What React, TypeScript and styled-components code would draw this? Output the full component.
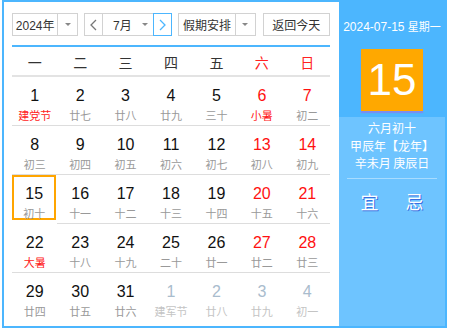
import React from 'react';
import styled, { createGlobalStyle } from 'styled-components';

const GlobalStyle = createGlobalStyle`
  html, body {
    margin: 0;
    padding: 0;
    background: #fff;
  }
  body {
    font-family: "Liberation Sans", Arial, "Noto Sans CJK SC", sans-serif;
  }
`

const Widget = styled.div`
  box-sizing: border-box;
  width: 445px;
  height: 328px;
  margin-left: 2px;
  border: 2px solid #4cb6fe;
  display: flex;
`

const Main = styled.div`
  width: 335px;
  padding: 11px 9px 0 8px;
  box-sizing: border-box;
  display: flex;
  flex-direction: column;
`

const Toolbar = styled.div`
  display: flex;
  align-items: center;
  height: 23px;
  gap: 6px;
  padding-bottom: 9px;
  border-bottom: 2px solid #4cb6fe;
`

const Select = styled.div<{ $w: number }>`
  box-sizing: border-box;
  width: ${p => p.$w}px;
  height: 23px;
  border: 1px solid #d2d2d2;
  display: flex;
  align-items: center;
  font-size: 12px;
  color: #333;
  background: #fff;
`

const SelectText = styled.span`
  flex: 1;
  text-align: center;
`

const Arrow = styled.span`
  width: 19px;
  height: 100%;
  border-left: 1px solid #d2d2d2;
  display: flex;
  align-items: center;
  justify-content: center;
  &::after {
    content: '';
    border-left: 3px solid transparent;
    border-right: 3px solid transparent;
    border-top: 3px solid #888;
  }
`

const MonthGroup = styled.div`
  display: flex;
  height: 23px;
`

const NavButton = styled.div<{ $active?: boolean }>`
  box-sizing: border-box;
  width: 19px;
  height: 23px;
  border: 1px solid ${p => p.$active ? '#4cb6fe' : '#d2d2d2'};
  display: flex;
  align-items: center;
  justify-content: center;
  background: #fff;
`

const MonthSelect = styled.div`
  box-sizing: border-box;
  width: 50px;
  height: 23px;
  border-top: 1px solid #d2d2d2;
  border-bottom: 1px solid #d2d2d2;
  display: flex;
  align-items: center;
  font-size: 12px;
  color: #333;
  padding-left: 4px;
  & > span:first-child {
    flex: 1;
    text-align: center;
  }
`

const MonthArrow = styled.span`
  width: 16px;
  display: flex;
  justify-content: center;
  &::after {
    content: '';
    border-left: 3px solid transparent;
    border-right: 3px solid transparent;
    border-top: 3px solid #888;
  }
`

const TodayButton = styled.div`
  box-sizing: border-box;
  width: 68px;
  height: 23px;
  margin-left: 1px;
  border: 1px solid #d2d2d2;
  display: flex;
  align-items: center;
  justify-content: center;
  font-size: 12px;
  color: #333;
`

const Grid = styled.div`
  display: grid;
  grid-template-columns: repeat(7, 1fr);
`

const WeekHead = styled.div<{ $red?: boolean }>`
  height: 27px;
  padding-top: 1px;
  display: flex;
  align-items: center;
  justify-content: center;
  font-size: 14px;
  color: ${p => p.$red ? '#f22' : '#333'};
  border-bottom: 2px solid #e3e3e3;
`

const Cell = styled.div<{ $today?: boolean; $last?: boolean }>`
  box-sizing: border-box;
  height: ${p => p.$last ? 48 : 49}px;
  border-bottom: ${p => p.$last ? 'none' : '1px solid #ddd'};
  display: flex;
  flex-direction: column;
  align-items: center;
  padding-top: ${p => p.$today ? 8 : 10}px;
  ${p => p.$today && `
    border: 2px solid #ffa500;
    margin-right: 1px;
    height: 45px;
    margin-bottom: 2px;
  `}
`

const DayNum = styled.div<{ $tone: 'normal' | 'red' | 'other' }>`
  font-size: 16px;
  line-height: 18px;
  color: ${p => p.$tone === 'red' ? '#f11' : p.$tone === 'other' ? '#a9bccd' : '#111'};
`

const Lunar = styled.div<{ $tone: 'normal' | 'red' | 'other' }>`
  font-size: 11px;
  line-height: 16px;
  margin-top: 2px;
  font-family: "Noto Sans CJK SC", sans-serif;
  color: ${p => p.$tone === 'red' ? '#f22' : p.$tone === 'other' ? '#c4c4c4' : '#999'};
`

const Side = styled.div`
  flex: 1;
  display: flex;
  flex-direction: column;
  color: #fff;
`

const SideTop = styled.div`
  background: #4cb6fe;
  height: 115px;
  display: flex;
  flex-direction: column;
  align-items: center;
`

const DateLine = styled.div`
  font-size: 12px;
  line-height: 16px;
  margin-top: 16px;
  font-family: "Liberation Sans Narrow", "Liberation Sans", sans-serif;
  & > span {
    font-family: "Noto Sans CJK SC", sans-serif;
    font-size: 11px;
  }
`

const BigDay = styled.div`
  width: 62px;
  height: 62px;
  margin-top: 14px;
  background: #ffa800;
  box-shadow: 0 2px 1px #7a8ef0;
  display: flex;
  align-items: center;
  justify-content: center;
  font-size: 44px;
  color: #fff;
`

const SideBottom = styled.div`
  flex: 1;
  background: #6ec4ff;
  display: flex;
  flex-direction: column;
  align-items: center;
  padding-top: 2px;
`

const InfoLine = styled.div`
  font-size: 12px;
  line-height: 17.5px;
  font-family: "Noto Sans CJK SC", sans-serif;
`

const Divider = styled.div`
  width: 90px;
  height: 1px;
  background: #a8dcff;
  margin-top: 6px;
`

const YiJi = styled.div`
  display: flex;
  gap: 27px;
  margin-top: 11px;
  font-size: 18px;
  line-height: 22px;
  font-family: "Noto Sans CJK SC", sans-serif;
  text-shadow: 1px 1px 0 #3a6fe0;
`

const Chevron = ({ dir, color }: { dir: 'left' | 'right'; color: string }) => (
  <svg width="7" height="12" viewBox="0 0 7 12">
    <path d={dir === 'left' ? 'M6 1 L1 6 L6 11' : 'M1 1 L6 6 L1 11'} fill="none" stroke={color} strokeWidth="1.3" />
  </svg>
)

type Tone = 'normal' | 'red' | 'other'
interface Day { n: number; lunar: string; numTone: Tone; lunarTone: Tone; today?: boolean }

const raw: [number, string, boolean?][] = [
  [1, '建党节', true], [2, '廿七'], [3, '廿八'], [4, '廿九'], [5, '三十'], [6, '小暑', true], [7, '初二'],
  [8, '初三'], [9, '初四'], [10, '初五'], [11, '初六'], [12, '初七'], [13, '初八'], [14, '初九'],
  [15, '初十'], [16, '十一'], [17, '十二'], [18, '十三'], [19, '十四'], [20, '十五'], [21, '十六'],
  [22, '大暑', true], [23, '十八'], [24, '十九'], [25, '二十'], [26, '廿一'], [27, '廿二'], [28, '廿三'],
  [29, '廿四'], [30, '廿五'], [31, '廿六'], [1, '建军节'], [2, '廿八'], [3, '廿九'], [4, '初一'],
]

const days: Day[] = raw.map(([n, lunar, fest], i) => {
  const other = i >= 31
  const weekend = i % 7 >= 5
  return {
    n,
    lunar,
    numTone: other ? 'other' : weekend ? 'red' : 'normal',
    lunarTone: other ? 'other' : fest ? 'red' : 'normal',
    today: i === 14,
  }
})

const weekNames = ['一', '二', '三', '四', '五', '六', '日']

const App = () => {
  return (
    <>
      <GlobalStyle />
      <Widget>
        <Main>
          <Toolbar>
            <Select $w={67}>
              <SelectText>2024年</SelectText>
              <Arrow />
            </Select>
            <MonthGroup>
              <NavButton><Chevron dir="left" color="#777" /></NavButton>
              <MonthSelect>
                <span>7月</span>
                <MonthArrow />
              </MonthSelect>
              <NavButton $active><Chevron dir="right" color="#4cb6fe" /></NavButton>
            </MonthGroup>
            <Select $w={78}>
              <SelectText>假期安排</SelectText>
              <Arrow />
            </Select>
            <TodayButton>返回今天</TodayButton>
          </Toolbar>
          <Grid>
            {weekNames.map((w, i) => <WeekHead key={w} $red={i >= 5}>{w}</WeekHead>)}
            {days.map((d, i) => (
              <Cell key={i} $today={d.today} $last={i >= 28}>
                <DayNum $tone={d.numTone}>{d.n}</DayNum>
                <Lunar $tone={d.lunarTone}>{d.lunar}</Lunar>
              </Cell>
            ))}
          </Grid>
        </Main>
        <Side>
          <SideTop>
            <DateLine>2024-07-15 <span>星期一</span></DateLine>
            <BigDay>15</BigDay>
          </SideTop>
          <SideBottom>
            <InfoLine>六月初十</InfoLine>
            <InfoLine>甲辰年【龙年】</InfoLine>
            <InfoLine>辛未月 庚辰日</InfoLine>
            <Divider />
            <YiJi>
              <span>宜</span>
              <span>忌</span>
            </YiJi>
          </SideBottom>
        </Side>
      </Widget>
    </>
  );
};

export default App;
